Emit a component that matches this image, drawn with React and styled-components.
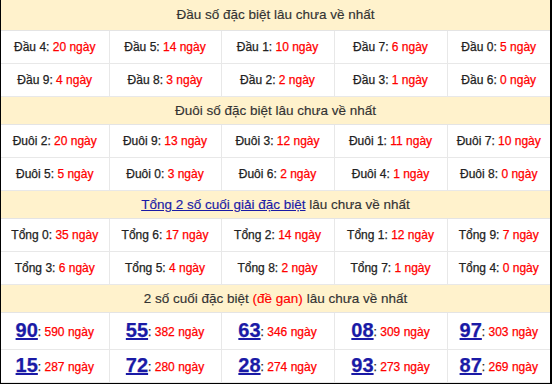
import React from "react";
import styled, { createGlobalStyle } from "styled-components";

const Global = createGlobalStyle`
  html, body { margin: 0; padding: 0; background: #fff; }
  body { font-family: Arial, "Liberation Sans", sans-serif; }
`;

const Frame = styled.div`
  width: 552px;
  height: 384px;
  box-sizing: border-box;
  border-left: 1px solid #000;
  border-right: 2px solid #000;
  border-bottom: 1px solid #000;
  overflow: hidden;
`;

const Table = styled.table`
  width: 100%;
  border-collapse: collapse;
  table-layout: fixed;
`;

const Col = styled.col`
  width: ${(p) => (p.$w ? `${p.$w}px` : "auto")};
`;

const HeadCell = styled.td`
  background: #fff2cc;
  height: ${(p) => p.$h || 28}px;
  padding: 0;
  text-align: center;
  font-size: 13.5px;
  color: #333;
  border-bottom: 1px solid #e4e4e4;
  box-sizing: border-box;
  -webkit-text-stroke: 0.15px currentColor;
`;

const Cell = styled.td`
  height: ${(p) => p.$h || 33}px;
  padding: 0;
  text-align: center;
  font-size: 12px;
  color: #222;
  border-left: 1px solid #e8e8e8;
  border-bottom: 1px solid #e8e8e8;
  box-sizing: border-box;
  white-space: nowrap;
  -webkit-text-stroke: 0.25px currentColor;
  &:first-child { border-left: none; }
`;

const Red = styled.span`
  color: #ff0000;
  font-size: ${(p) => p.$size || 12}px;
`;

const Link = styled.a`
  color: #1a1aa6;
  text-decoration: underline;
`;

const Big = styled.a`
  color: #1a1aa6;
  font-size: 20px;
  font-weight: bold;
  text-decoration: underline;
  vertical-align: -1px;
`;

const sections = [
  {
    head: <>Đầu số đặc biệt lâu chưa về nhất</>,
    prefix: "Đầu",
    rows: [
      [["4", 20], ["5", 14], ["1", 10], ["7", 6], ["0", 5]],
      [["9", 4], ["8", 3], ["2", 2], ["3", 1], ["6", 0]],
    ],
  },
  {
    head: <>Đuôi số đặc biệt lâu chưa về nhất</>,
    prefix: "Đuôi",
    rows: [
      [["2", 20], ["9", 13], ["3", 12], ["1", 11], ["7", 10]],
      [["5", 5], ["0", 3], ["6", 2], ["4", 1], ["8", 0]],
    ],
  },
  {
    head: (
      <>
        <Link href="#">Tổng 2 số cuối giải đặc biệt</Link> lâu chưa về nhất
      </>
    ),
    prefix: "Tổng",
    rows: [
      [["0", 35], ["6", 17], ["2", 14], ["1", 12], ["9", 7]],
      [["3", 6], ["5", 4], ["8", 2], ["7", 1], ["4", 0]],
    ],
  },
];

const gan = [
  [["90", 590], ["55", 382], ["63", 346], ["08", 309], ["97", 303]],
  [["15", 287], ["72", 280], ["28", 274], ["93", 273], ["87", 269]],
];

export default function App() {
  return (
    <>
      <Global />
      <Frame>
        <Table>
          <colgroup>
            <Col $w={108} />
            <Col $w={112} />
            <Col $w={113} />
            <Col $w={113} />
            <Col />
          </colgroup>
          <tbody>
            {sections.map((s, si) => (
              <React.Fragment key={si}>
                <tr>
                  <HeadCell colSpan={5} $h={si === 0 ? 30 : 28}>
                    {s.head}
                  </HeadCell>
                </tr>
                {s.rows.map((r, ri) => (
                  <tr key={ri}>
                    {r.map(([k, v]) => (
                      <Cell key={k}>
                        {s.prefix} {k}: <Red>{v} ngày</Red>
                      </Cell>
                    ))}
                  </tr>
                ))}
              </React.Fragment>
            ))}
            <tr>
              <HeadCell colSpan={5}>
                2 số cuối đặc biệt <Red $size={13.5}>(đề gan)</Red> lâu chưa về nhất
              </HeadCell>
            </tr>
            {gan.map((r, ri) => (
              <tr key={ri}>
                {r.map(([k, v]) => (
                  <Cell key={k} $h={ri === 0 ? 37 : 33}>
                    <Big href="#">{k}</Big>: <Red>{v} ngày</Red>
                  </Cell>
                ))}
              </tr>
            ))}
          </tbody>
        </Table>
      </Frame>
    </>
  );
}
